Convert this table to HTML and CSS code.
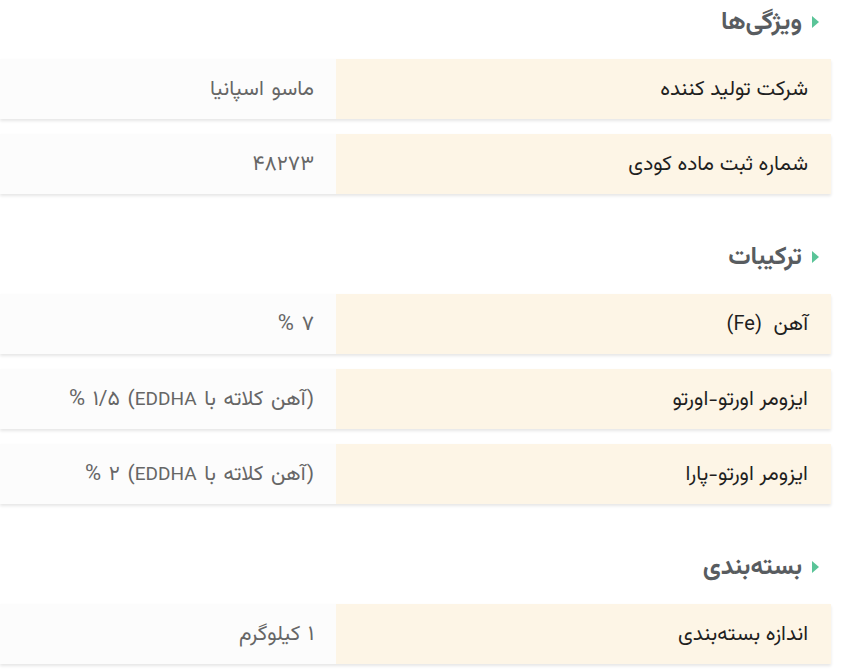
FILE: index.html
```html
<!DOCTYPE html>
<html lang="fa" dir="rtl">
<head>
<meta charset="utf-8">
<link rel="stylesheet" href="styles.css">
</head>
<body>
<div class="specs">
  <section class="group">
    <h3 class="group-title"><span class="marker"></span><span>ویژگی‌ها</span></h3>
    <div class="row"><div class="label"><span>شرکت تولید کننده</span></div><div class="value"><span>ماسو اسپانیا</span></div></div>
    <div class="row"><div class="label"><span>شماره ثبت ماده کودی</span></div><div class="value"><span>۴۸۲۷۳</span></div></div>
  </section>
  <section class="group">
    <h3 class="group-title"><span class="marker"></span><span>ترکیبات</span></h3>
    <div class="row"><div class="label"><span>آهن <span class="latin symbol">(Fe)</span></span></div><div class="value"><span>۷ <span class="pct">%</span></span></div></div>
    <div class="row"><div class="label"><span>ایزومر اورتو-اورتو</span></div><div class="value"><span>(آهن کلاته با <span class="latin">EDDHA</span>) <span class="num">۱/۵</span> <span class="pct">%</span></span></div></div>
    <div class="row"><div class="label"><span>ایزومر اورتو-پارا</span></div><div class="value"><span>(آهن کلاته با <span class="latin">EDDHA</span>) <span class="num">۲</span> <span class="pct">%</span></span></div></div>
  </section>
  <section class="group">
    <h3 class="group-title"><span class="marker"></span><span>بسته‌بندی</span></h3>
    <div class="row"><div class="label"><span>اندازه بسته‌بندی</span></div><div class="value"><span>۱ کیلوگرم</span></div></div>
  </section>
</div>
</body>
</html>
```

FILE: styles.css
```css
html, body {
  margin: 0;
  padding: 0;
  background: #ffffff;
}
body {
  direction: rtl;
  font-family: "Vazirmatn", "Noto Sans Arabic", "DejaVu Sans", sans-serif;
}
.specs {
  margin: 0 15px 0 0;
}
.group {
  display: flex;
  flex-direction: column;
  gap: 15px;
  margin-bottom: 41px;
}
.group-title {
  display: flex;
  align-items: center;
  gap: 10px;
  height: 44px;
  margin: 0;
  padding-right: 12px;
  font-size: 25px;
  font-weight: 700;
  color: #585c60;
}
.marker {
  width: 0;
  height: 0;
  border-top: 6px solid transparent;
  border-bottom: 6px solid transparent;
  border-left: 7px solid #5ac498;
}
.row {
  display: flex;
  height: 60px;
  box-shadow: 0 2px 3px rgba(0, 0, 0, 0.1);
}
.label {
  width: 495px;
  flex: none;
  display: flex;
  align-items: center;
  padding-right: 23px;
  box-sizing: border-box;
  background: #fdf5e6;
  color: #1f1f1f;
  font-size: 21px;
}
.value {
  flex: 1;
  display: flex;
  align-items: center;
  padding-right: 22px;
  background: #fcfcfc;
  color: #666;
  font-size: 21px;
  word-spacing: 2px;
}
.latin {
  font-size: 19px;
}
.symbol {
  font-size: 20px;
  margin-right: 6px;
}
.pct {
  font-size: 22px;
}
.num {
  letter-spacing: 1px;
}
```
